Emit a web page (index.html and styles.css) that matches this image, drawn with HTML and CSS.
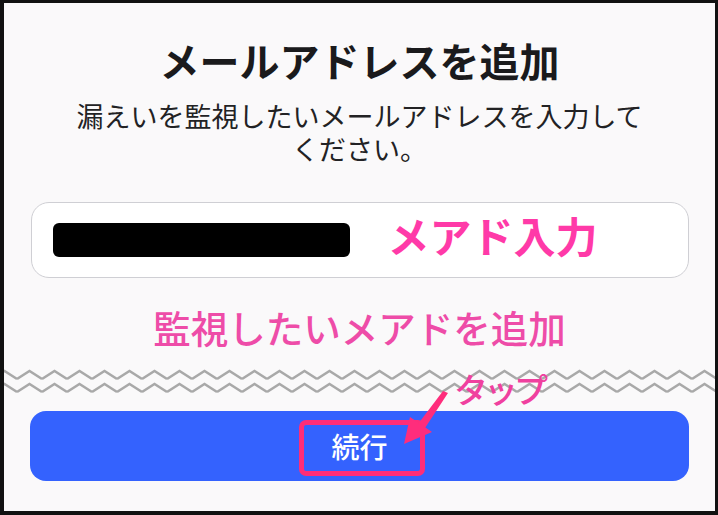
FILE: index.html
```html
<!DOCTYPE html>
<html lang="ja">
<head>
<meta charset="utf-8">
<link rel="stylesheet" href="styles.css">
</head>
<body>
<div class="frame">
  <h1 class="title">メールアドレスを追加</h1>
  <p class="lead">漏えいを監視したいメールアドレスを入力して<br>ください。</p>
  <div class="field">
    <span class="redact"></span>
    <span class="note-input">メアド入力</span>
  </div>
  <p class="note-add">監視したいメアドを追加</p>
  <svg class="zigzag" width="712" height="30" viewBox="0 0 712 30">
    <defs>
      <pattern id="zz" x="-12" y="0" width="25" height="30" patternUnits="userSpaceOnUse">
        <polyline points="0,12 12.5,4 25,12" fill="none" stroke="#a9a9a9" stroke-width="2.5"/>
        <polyline points="0,25 12.5,17 25,25" fill="none" stroke="#a9a9a9" stroke-width="2.5"/>
      </pattern>
    </defs>
    <rect x="0" y="0" width="712" height="30" fill="url(#zz)"/>
  </svg>
  <div class="button">
    <span class="button-label">続行</span>
    <span class="highlight"></span>
  </div>
  <svg class="arrow" width="718" height="515" viewBox="0 0 718 515">
    <polygon points="443,391 448,393 425,428 418,424" fill="#ff2d7c"/>
    <polygon points="404,444 410,417 432,432" fill="#ff2d7c"/>
  </svg>
  <span class="tap">タップ</span>
</div>
</body>
</html>
```
FILE: styles.css
```css
html, body {
  margin: 0;
  padding: 0;
  background: #ffffff;
}
.frame {
  position: relative;
  width: 718px;
  height: 515px;
  box-sizing: border-box;
  border: 3px solid #111111;
  border-left-width: 4px;
  border-bottom-width: 4px;
  background: #faf9fa;
  display: flex;
  flex-direction: column;
  align-items: center;
  font-family: "Noto Sans CJK JP", "Noto Sans", sans-serif;
  overflow: hidden;
}
.title {
  margin: 33px 0 0;
  font-size: 40px;
  line-height: 48px;
  font-weight: 700;
  color: #1a1a1c;
}
.lead {
  margin: 15px 0 0;
  font-size: 27px;
  line-height: 33px;
  font-weight: 400;
  color: #222224;
  text-align: center;
}
.field {
  margin-top: 37px;
  width: 658px;
  height: 76px;
  box-sizing: border-box;
  border: 1.5px solid #cfcfd4;
  border-radius: 18px;
  background: #ffffff;
  display: flex;
  align-items: center;
  padding-left: 21px;
}
.redact {
  width: 297px;
  height: 34px;
  background: #000000;
  border-radius: 6px;
}
.note-input {
  margin-left: 38px;
  margin-bottom: 10px;
  font-size: 42px;
  line-height: 50px;
  font-weight: 700;
  color: #ff3aa8;
}
.note-add {
  margin: 26px 0 0;
  font-size: 37.5px;
  line-height: 45px;
  font-weight: 500;
  color: #ee4ca8;
}
.zigzag {
  display: block;
  margin-top: 18px;
}
.button {
  position: relative;
  margin-top: 14px;
  width: 659px;
  height: 70px;
  background: #3462fe;
  border-radius: 16px;
  display: flex;
  align-items: center;
  justify-content: center;
}
.button-label {
  font-size: 28px;
  line-height: 34px;
  font-weight: 500;
  color: #ffffff;
}
.highlight {
  position: absolute;
  left: 269px;
  top: 9px;
  width: 126px;
  height: 56px;
  box-sizing: border-box;
  border: 5px solid #ff2d78;
  border-radius: 7px;
}
.arrow {
  position: absolute;
  left: -4px;
  top: -3px;
}
.tap {
  position: absolute;
  left: 450px;
  top: 366px;
  font-size: 34px;
  line-height: 40px;
  letter-spacing: -4px;
  font-weight: 500;
  color: #f0409f;
}
```
